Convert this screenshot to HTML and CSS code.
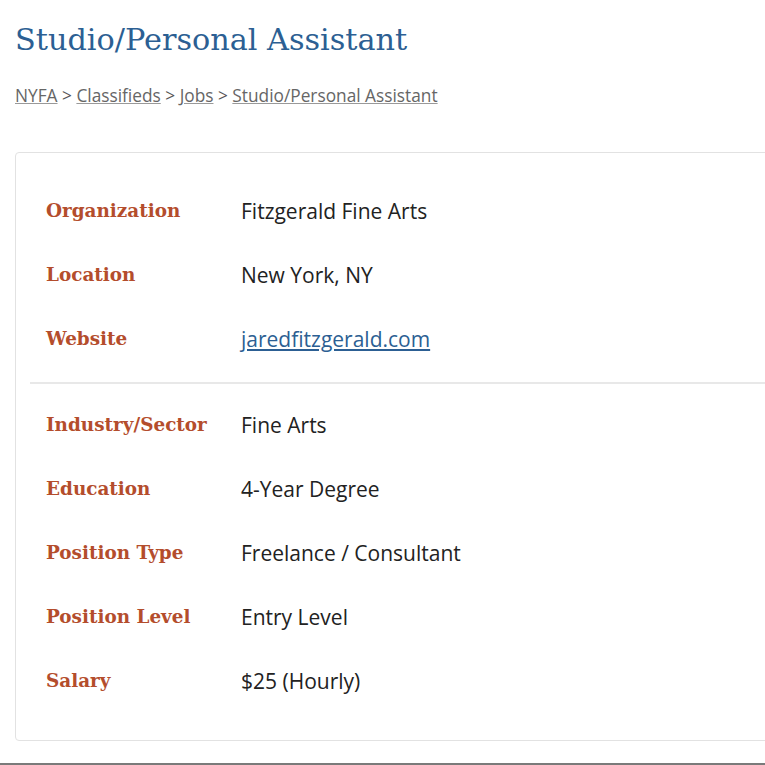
FILE: index.html
```html
<!DOCTYPE html>
<html lang="en">
<head>
<meta charset="utf-8">
<title>Studio/Personal Assistant</title>
<link rel="stylesheet" href="styles.css">
</head>
<body>
<main class="page">
  <h1 class="title">Studio/Personal Assistant</h1>
  <nav class="crumbs">
    <a href="#">NYFA</a> &gt; <a href="#">Classifieds</a> &gt; <a href="#">Jobs</a> &gt; <a href="#">Studio/Personal Assistant</a>
  </nav>
  <section class="card">
    <dl class="group">
      <dt>Organization</dt><dd>Fitzgerald Fine Arts</dd>
      <dt>Location</dt><dd>New York, NY</dd>
      <dt>Website</dt><dd><a href="#" class="link">jaredfitzgerald.com</a></dd>
    </dl>
    <dl class="group">
      <dt>Industry/Sector</dt><dd>Fine Arts</dd>
      <dt>Education</dt><dd>4-Year Degree</dd>
      <dt>Position Type</dt><dd>Freelance / Consultant</dd>
      <dt>Position Level</dt><dd>Entry Level</dd>
      <dt>Salary</dt><dd>$25 (Hourly)</dd>
    </dl>
  </section>
  <div class="footer-rule"></div>
</main>
</body>
</html>
```
FILE: styles.css
```css
html, body {
  margin: 0;
  padding: 0;
  overflow: hidden;
  background: #ffffff;
}
.page {
  padding: 0 0 0 15px;
  width: 900px;
  font-family: "Open Sans", "Lato", sans-serif;
  color: #222;
}
.title {
  margin: 0;
  padding-top: 20px;
  font-family: "DejaVu Serif", serif;
  font-weight: normal;
  font-size: 30.3px;
  line-height: 40px;
  color: #2c5f93;
}
.crumbs {
  margin-top: 25px;
  font-size: 17.3px;
  line-height: 22px;
  color: #555;
}
.crumbs a {
  color: #666;
  text-decoration: underline;
  text-decoration-color: #999;
}
.card {
  margin-top: 45px;
  border: 1px solid #e2e2e2;
  border-radius: 4px;
  padding: 26px 0 27px 14px;
  width: 860px;
}
.group {
  margin: 0;
  padding-left: 16px;
  display: grid;
  grid-template-columns: 195px 1fr;
}
.group + .group {
  border-top: 2px solid #e8e8e8;
  margin-top: 11px;
  padding-top: 9px;
}
.group dt, .group dd {
  margin: 0;
  padding: 16px 0;
  line-height: 32px;
  font-size: 21px;
}
.group dt {
  font-family: "DejaVu Serif", serif;
  font-weight: bold;
  font-size: 18.4px;
  color: #b44d2c;
}
.group dd {
  color: #222;
}
.link {
  color: #2c5f93;
  text-decoration: underline;
}
.footer-rule {
  margin-left: -15px;
  margin-top: 22px;
  height: 2px;
  background: #7a7a7a;
}
```
